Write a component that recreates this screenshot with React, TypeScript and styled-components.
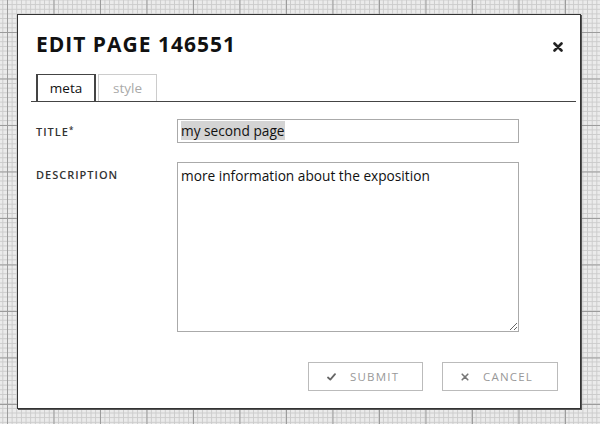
import React from 'react';
import styled, { createGlobalStyle } from 'styled-components';

const GlobalStyle = createGlobalStyle`
  html, body {
    margin: 0;
    padding: 0;
  }
  body {
    font-family: "Open Sans", "DejaVu Sans", sans-serif;
    background-color: #ebebeb;
    background-image:
      linear-gradient(to right, #9c9c9c 1px, transparent 1px),
      linear-gradient(to bottom, #9c9c9c 1px, transparent 1px),
      linear-gradient(to right, #cbcbcb 1px, transparent 1px),
      linear-gradient(to bottom, #cbcbcb 1px, transparent 1px);
    background-size: 46.5px 46.5px, 46.5px 46.5px, 4.65px 4.65px, 4.65px 4.65px;
    background-position: 7px 32px, 7px 32px, 7px 32px, 7px 32px;
  }
`

const Page = styled.div`
  height: 424px;
  box-sizing: border-box;
  padding: 14px 19px 15px 17px;
  display: flex;
`

const Modal = styled.div`
  flex: 1;
  background: #fff;
  border: 1px solid #333;
  box-shadow: 1px 1px 0 #555;
  display: flex;
  flex-direction: column;
  padding: 16px 17px 17px 18px;
`

const Header = styled.div`
  display: flex;
  align-items: center;
  justify-content: space-between;
  height: 26px;
`

const Title = styled.h1`
  margin: 0;
  font-size: 21px;
  font-weight: 700;
  color: #111;
  letter-spacing: 1px;
`

const Close = styled.button`
  border: none;
  background: none;
  padding: 0;
  width: 10px;
  height: 10px;
  margin-top: 6px;
  display: flex;
  cursor: pointer;
`

const TabBar = styled.div`
  display: flex;
  gap: 2px;
  margin: 17px -13px 0 -5px;
  padding-left: 5px;
  border-bottom: 1px solid #444;
`

const Tab = styled.button<{ $active?: boolean }>`
  font-family: inherit;
  font-size: 13.5px;
  height: 27px;
  padding: 0;
  width: ${p => p.$active ? 60 : 59}px;
  background: #fff;
  color: ${p => p.$active ? '#111' : '#aaa'};
  border: 1px solid ${p => p.$active ? '#444' : '#ccc'};
  border-width: ${p => p.$active ? '1px 2px 0 2px' : '1px 1px 0 1px'};
  cursor: pointer;
`

const Form = styled.div`
  display: grid;
  grid-template-columns: 141px 342px;
  row-gap: 19px;
  margin-top: 17px;
`

const Label = styled.label`
  font-size: 11px;
  font-weight: 600;
  letter-spacing: 1px;
  color: #333;
  padding-top: 5px;

  sup {
    font-size: 8px;
    vertical-align: 3px;
  }
`

const TextField = styled.div`
  box-sizing: border-box;
  height: 24px;
  border: 1px solid #aaa;
  padding: 2px 3px;
  font-size: 13.7px;
  line-height: 18px;
  color: #111;
`

const Selected = styled.span`
  background: #d4d4d4;
`

const TextArea = styled.textarea`
  box-sizing: border-box;
  height: 170px;
  border: 1px solid #aaa;
  padding: 3px 3px;
  font-family: inherit;
  font-size: 13.7px;
  color: #111;
  resize: both;
  outline: none;
`

const Actions = styled.div`
  display: flex;
  justify-content: flex-end;
  gap: 19px;
  margin-top: auto;
  padding-right: 5px;
`

const ActionButton = styled.button<{ $width: number }>`
  box-sizing: border-box;
  width: ${p => p.$width}px;
  height: 29px;
  background: #fff;
  border: 1px solid #bbb;
  display: flex;
  align-items: center;
  gap: 14px;
  padding: 0 0 0 18px;
  font-family: inherit;
  font-size: 11.5px;
  letter-spacing: 1.2px;
  color: #999;
  cursor: pointer;
`

const CrossIcon: React.FC<{ size: number; color: string; weight: number }> = ({ size, color, weight }) => (
  <svg width={size} height={size} viewBox="0 0 10 10">
    <path d="M1.5 1.5 L8.5 8.5 M8.5 1.5 L1.5 8.5" stroke={color} strokeWidth={weight} strokeLinecap="round" />
  </svg>
);

const CheckIcon = () => (
  <svg width="9" height="8" viewBox="0 0 9 8">
    <path d="M1 4.5 L3.3 6.6 L8 1.2" stroke="#666" strokeWidth="1.8" fill="none" strokeLinecap="round" strokeLinejoin="round" />
  </svg>
);

const App: React.FC = () => {
  return (
    <Page>
      <GlobalStyle />
      <Modal>
        <Header>
          <Title>EDIT PAGE 146551</Title>
          <Close aria-label="close">
            <CrossIcon size={10} color="#222" weight={2.6} />
          </Close>
        </Header>
        <TabBar>
          <Tab $active>meta</Tab>
          <Tab>style</Tab>
        </TabBar>
        <Form>
          <Label>TITLE<sup>*</sup></Label>
          <TextField><Selected>my second page</Selected></TextField>
          <Label>DESCRIPTION</Label>
          <TextArea readOnly defaultValue="more information about the exposition" />
        </Form>
        <Actions>
          <ActionButton $width={115}>
            <CheckIcon />
            SUBMIT
          </ActionButton>
          <ActionButton $width={116}>
            <CrossIcon size={8} color="#777" weight={2} />
            CANCEL
          </ActionButton>
        </Actions>
      </Modal>
    </Page>
  );
}
export default App;
